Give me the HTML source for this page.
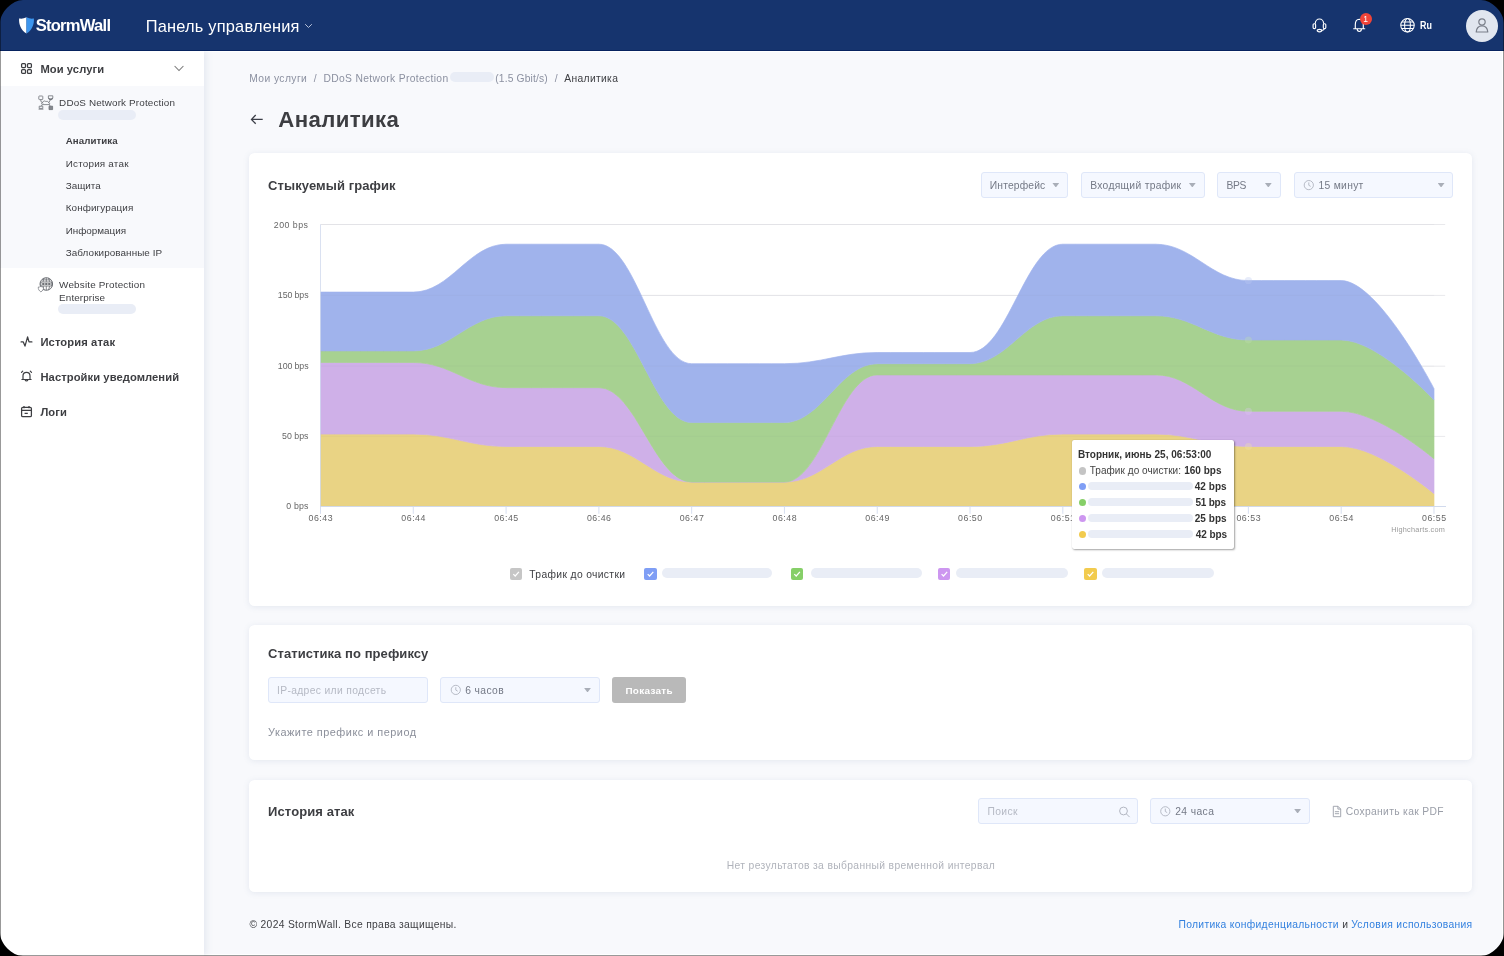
<!DOCTYPE html>
<html lang="ru"><head><meta charset="utf-8"><title>StormWall — Аналитика</title>
<style>
*{box-sizing:border-box;margin:0;padding:0}
html,body{width:1504px;height:956px;background:#000;overflow:hidden}
body{font-family:"Liberation Sans",sans-serif;-webkit-font-smoothing:antialiased}
#win{will-change:transform;position:absolute;left:0;top:0;width:1504px;height:956px;overflow:hidden;background:transparent}
#page{position:absolute;left:0;top:51px;width:1504px;height:905px;background:#fff}
.corner{z-index:10}
.t{position:absolute;white-space:pre;display:block}
a.t{text-decoration:none}
header{position:absolute;left:0;top:0;width:1504px;height:51px;background:#16346e;border-bottom:1px solid #07235f;z-index:5}
#side{position:absolute;left:0;top:51px;width:204px;height:905px;background:#fff;box-shadow:2px 0 7px rgba(105,125,160,.14);z-index:3}
#side .sub{position:absolute;left:0;top:35px;width:204px;height:181.5px;background:#f8f9fc}
.pill{position:absolute;background:#e9edf6;border-radius:6px}
main{position:absolute;left:0;top:0;width:1504px;height:956px}
#bg{position:absolute;left:204px;top:52px;width:1298px;height:902px;background:#f8f9fc}
.card{position:absolute;left:249px;width:1223px;background:#fff;border-radius:5.5px;box-shadow:0 1px 6px rgba(105,125,160,.14)}
.sel{position:absolute;height:26px;background:#f5f8ff;border:1px solid #dfe7f9;border-radius:3px}
.sel i{position:absolute;right:7.8px;top:9.9px;width:6.8px;height:4.6px;background:#a9aeb8;clip-path:polygon(0 0,100% 0,50% 100%)}
.btn{position:absolute;background:#b9b9b9;border-radius:3px}
svg{position:absolute;overflow:visible}
.edgeL{position:absolute;left:0;top:0;width:1px;height:956px;background:rgba(0,0,0,.4);z-index:9}
.edgeB{position:absolute;left:0;top:955px;width:1504px;height:1px;background:rgba(0,0,0,.4);z-index:9}
.edgeR{position:absolute;left:1503px;top:0;width:1px;height:956px;background:rgba(0,0,0,.42);z-index:9}
</style></head>
<body>
<div id="win">
<div id="page"></div>
<header>
<svg style="left:18px;top:17px" width="16" height="17" viewBox="0 0 16 17"><g transform="translate(0.500,0.000)"><path d="M8 0.3C5.6 1.6 3 1.9 0.6 1.5C0.2 7.5 2.6 13.3 8 16.6Z" fill="#fff"/><path d="M8 0.3C10.4 1.6 13 1.9 15.4 1.5C15.8 7.5 13.4 13.3 8 16.6Z" fill="#3d96ee"/></g></svg>
<div class="t" style="left:35.64px;top:14.60px;font-size:16.6px;line-height:22px;font-weight:700;color:#fff;letter-spacing:-0.753px;">StormWall</div>
<div class="t" style="left:145.74px;top:15.70px;font-size:16.4px;line-height:21px;font-weight:400;color:#fff;letter-spacing:0.198px;">Панель управления</div>
<svg style="left:304px;top:23px" width="8" height="6" viewBox="0 0 8 6"><g transform="translate(0.500,0.000)"><path d="M0.7 1.2L4 4.5L7.3 1.2" fill="none" stroke="#b9c3da" stroke-width="1"/></g></svg>
<svg style="left:1312px;top:18px" width="15" height="15" viewBox="0 0 15 15" fill="none" stroke="#fff" stroke-width="1.15"><path d="M3.3 5.8V5.4a4.15 4.4 0 0 1 8.3 0v0.4"/><rect x="1.1" y="5.7" width="2.5" height="4.9" rx="1.1"/><rect x="11.3" y="5.7" width="2.5" height="4.9" rx="1.1"/><path d="M12.3 10.6c-0.2 1.1-1.2 1.7-2.6 1.9"/><ellipse cx="7.5" cy="12.6" rx="2.3" ry="1.25"/></svg>
<svg style="left:1352px;top:17px" width="15" height="15" viewBox="0 0 15 15" fill="none" stroke="#fff" stroke-width="1.15"><g transform="translate(0.000,0.500)"><path d="M1.2 11.2h12M3.3 11V7.2c0-3 1.6-5.4 4-5.5c2.400.1 4 2.500 4 5.5V11"/><path d="M5.2 11.6a2.1 2.4 0 0 0 4.200 0"/></g></svg>
<div style="position:absolute;left:1359.5px;top:12.7px;width:12.6px;height:12.6px;border-radius:50%;background:#f04438"></div>
<div class="t" style="left:1363.26px;top:13.50px;font-size:8.5px;line-height:11px;font-weight:400;color:#fff;letter-spacing:0.000px;">1</div>
<svg style="left:1399px;top:17px" width="15.4" height="15.4" viewBox="0 0 16 16" fill="none" stroke="#fff" stroke-width="1.1"><g transform="translate(0.831,0.623)"><circle cx="8" cy="8" r="7"/><ellipse cx="8" cy="8" rx="3" ry="7"/><path d="M1 8h14M2 4.6h12M2 11.4h12"/></g></svg>
<div class="t" style="left:1419.78px;top:18.70px;font-size:10.4px;line-height:14px;font-weight:700;color:#fff;letter-spacing:0.000px;transform:scaleX(.86);transform-origin:0 50%;">Ru</div>
<div style="position:absolute;left:1466px;top:9.5px;width:32px;height:32px;border-radius:50%;background:#e1e6ef"></div>
<svg style="left:1475px;top:18px" width="14" height="15" viewBox="0 0 14 15" fill="none" stroke="#7a7f8a" stroke-width="1.2"><circle cx="7" cy="4" r="3.2"/><path d="M1.2 14c0.3-3.8 2.6-6.2 5.8-6.2s5.5 2.4 5.8 6.2z" stroke-linejoin="round"/></svg>
</header>
<nav id="side">
<div class="sub"></div>
<svg style="left:21px;top:12px" width="11" height="11" viewBox="0 0 11 11" fill="none" stroke="#3d3e42" stroke-width="1.25"><rect x="0.6" y="0.6" width="3.9" height="3.9" rx="0.9"/><rect x="6.5" y="0.6" width="3.9" height="3.9" rx="0.9"/><rect x="0.6" y="6.5" width="3.9" height="3.9" rx="0.9"/><rect x="6.5" y="6.5" width="3.9" height="3.9" rx="0.9"/></svg>
<div class="t" style="left:40.45px;top:10.80px;font-size:11.2px;line-height:15px;font-weight:700;color:#3d3e42;letter-spacing:0.065px;">Мои услуги</div>
<svg style="left:174px;top:14px" width="10" height="7" viewBox="0 0 10 7"><path d="M0.6 1L5 5.6L9.4 1" fill="none" stroke="#777" stroke-width="1.05"/></svg>
<svg style="left:38px;top:44px" width="16" height="16" viewBox="0 0 16 16" fill="none" stroke="#6f7278" stroke-width="0.8" stroke-linejoin="round"><rect x="0.8" y="1" width="4" height="3.6" rx="0.6"/><path d="M2.8 4.6v1.6"/><path d="M10.4 0.8h4.4v2.2c0 1.3-4.4 1.3-4.4 0z" /><path d="M10.6 3.2c0.6 1.2 3.4 1.2 4 0v0.6c-0.6 1.2-3.4 1.2-4 0z" fill="#6f7278"/><path d="M4.4 9.6c-1.2-0.2-1.2-2.2 0.4-2.3c0.3-1.5 2.4-1.8 3.1-0.6c1.1-0.9 2.9-0.2 2.9 1.3c1.4 0.1 1.4 1.6 0.2 1.6z" fill="#f8f9fc"/><path d="M2.8 6l2.2 2.6M12.6 4.4l-1.6 3M4.6 9.6l-1.8 1.8M11 9.6l1.6 1.8"/><path d="M1.2 11.2h3.6v2.2h-3.6zM0.6 14.2h4.8" /><rect x="11" y="11.2" width="3.6" height="3.4" fill="#85888e"/></svg>
<div class="t" style="left:59.10px;top:44.90px;font-size:9.9px;line-height:13px;font-weight:400;color:#3d3e42;letter-spacing:0.151px;">DDoS Network Protection</div>
<div class="pill" style="left:58px;top:59px;width:78px;height:10px"></div>
<a class="t" style="left:65.71px;top:83.30px;font-size:9.7px;line-height:13px;font-weight:700;color:#3d3e42;letter-spacing:0.078px;">Аналитика</a>
<a class="t" style="left:65.70px;top:105.60px;font-size:9.9px;line-height:13px;font-weight:400;color:#3d3e42;letter-spacing:0.204px;">История атак</a>
<a class="t" style="left:65.70px;top:128.00px;font-size:9.9px;line-height:13px;font-weight:400;color:#3d3e42;letter-spacing:0.013px;">Защита</a>
<a class="t" style="left:65.70px;top:150.30px;font-size:9.9px;line-height:13px;font-weight:400;color:#3d3e42;letter-spacing:0.118px;">Конфигурация</a>
<a class="t" style="left:65.70px;top:172.60px;font-size:9.9px;line-height:13px;font-weight:400;color:#3d3e42;letter-spacing:-0.018px;">Информация</a>
<a class="t" style="left:65.70px;top:194.80px;font-size:9.9px;line-height:13px;font-weight:400;color:#3d3e42;letter-spacing:0.085px;">Заблокированные IP</a>
<svg style="left:37px;top:226px" width="16" height="16" viewBox="0 0 16 16" fill="none" stroke="#55585f" stroke-width="0.85"><g transform="translate(0.600,0.000)"><circle cx="8.7" cy="7" r="6.3"/><path d="M8.7 0.8v4M8.7 9.2v4M6.6 1.2c-0.6 1-1 2.2-1.1 3.6M10.8 1.2c0.6 1 1 2.2 1.1 3.6M5.5 9.2c0.1 1.4 0.5 2.6 1.1 3.6M11.9 9.2c-0.1 1.4-0.5 2.6-1.1 3.6M4.4 2.9h8.6" stroke-width="0.7"/><rect x="3.3" y="5" width="10.9" height="4" fill="#fff" stroke-width="0.75"/><path d="M4.6 7h8.3" stroke="#3f4248" stroke-width="1.7" stroke-dasharray="2.3 0.7"/><path d="M3.3 9.4c1 0.6 1.8 0.7 2.6 0.6c0.2 2.3-0.8 3.8-2.6 4.9c-1.8-1.1-2.8-2.6-2.6-4.9c0.8 0.1 1.6 0 2.6-0.6z" fill="#fff" stroke="#777a80" stroke-width="0.75"/></g></svg>
<div class="t" style="left:59.10px;top:226.80px;font-size:9.9px;line-height:13px;font-weight:400;color:#3d3e42;letter-spacing:0.183px;">Website Protection</div>
<div class="t" style="left:59.10px;top:239.60px;font-size:9.9px;line-height:13px;font-weight:400;color:#3d3e42;letter-spacing:0.108px;">Enterprise</div>
<div class="pill" style="left:58px;top:253px;width:78px;height:10px"></div>
<svg style="left:20px;top:284px" width="12" height="12" viewBox="0 0 12 12" fill="none" stroke="#3d3e42" stroke-width="1.25" stroke-linejoin="round" stroke-linecap="round"><g transform="translate(0.500,0.500)"><path d="M0.6 6.4h2.2l1.7 4.2L7.1 1.4l1.4 5h2.9"/></g></svg>
<a class="t" style="left:40.45px;top:283.60px;font-size:11.2px;line-height:15px;font-weight:700;color:#3d3e42;letter-spacing:0.114px;">История атак</a>
<svg style="left:20px;top:319px" width="12" height="13" viewBox="0 0 12 13" fill="none" stroke="#3d3e42" stroke-width="1.2" stroke-linecap="round"><g transform="translate(0.500,0.000)"><path d="M2.5 9.4V5.8a3.5 3.5 0 0 1 7 0v3.6M1.4 9.5h9.2M4.7 10a1.4 1.4 0 0 0 2.6 0M1 2.4l1.2-1.2M11 2.4L9.8 1.2"/></g></svg>
<a class="t" style="left:40.45px;top:319.20px;font-size:11.2px;line-height:15px;font-weight:700;color:#3d3e42;letter-spacing:0.076px;">Настройки уведомлений</a>
<svg style="left:21px;top:354px" width="11" height="12" viewBox="0 0 11 12" fill="none" stroke="#3d3e42" stroke-width="1.25"><g transform="translate(0.000,0.500)"><rect x="0.6" y="1.8" width="9.8" height="9.4" rx="1.3"/><path d="M0.6 4.9h9.8M3 0.4v2.4M8 0.4v2.4M3.6 7.9h3.2"/></g></svg>
<a class="t" style="left:40.45px;top:353.50px;font-size:11.2px;line-height:15px;font-weight:700;color:#3d3e42;letter-spacing:0.087px;">Логи</a>
</nav>
<main>
<div id="bg"></div>
<a class="t" style="left:249.19px;top:71.80px;font-size:10.3px;line-height:13px;font-weight:400;color:#8b90a0;letter-spacing:0.423px;">Мои услуги</a>
<span class="t" style="left:313.79px;top:71.80px;font-size:10.3px;line-height:13px;font-weight:400;color:#8b90a0;letter-spacing:0.846px;">/</span>
<a class="t" style="left:323.49px;top:71.80px;font-size:10.3px;line-height:13px;font-weight:400;color:#8b90a0;letter-spacing:0.334px;">DDoS Network Protection</a>
<div class="pill" style="left:450px;top:72px;width:43.5px;height:10px;border-radius:5px"></div>
<a class="t" style="left:495.19px;top:71.80px;font-size:10.3px;line-height:13px;font-weight:400;color:#8b90a0;letter-spacing:0.149px;">(1.5 Gbit/s)</a>
<span class="t" style="left:554.79px;top:71.80px;font-size:10.3px;line-height:13px;font-weight:400;color:#8b90a0;letter-spacing:0.846px;">/</span>
<span class="t" style="left:564.29px;top:71.80px;font-size:10.3px;line-height:13px;font-weight:400;color:#3d3e42;letter-spacing:0.328px;">Аналитика</span>
<svg style="left:250px;top:114px" width="13" height="11" viewBox="0 0 13 11" fill="none" stroke="#3b3e47" stroke-width="1.3"><g transform="translate(0.500,0.000)"><path d="M5.2 1L1 5.4l4.2 4.4M1.2 5.4h11"/></g></svg>
<h1 class="t" style="left:278.31px;top:105.10px;font-size:22.2px;line-height:29px;font-weight:700;color:#3d3e42;letter-spacing:0.389px;">Аналитика</h1>

<section class="card" style="top:153px;height:452.5px"></section>
<h2 class="t" style="left:268.08px;top:176.70px;font-size:13px;line-height:17px;font-weight:700;color:#3d3e42;letter-spacing:0.084px;">Стыкуемый график</h2>
<div class="sel" style="left:981px;top:172px;width:87px"><i></i></div><div class="t" style="left:989.79px;top:178.70px;font-size:10.3px;line-height:13px;font-weight:400;color:#747986;letter-spacing:0.152px;">Интерфейс</div>
<div class="sel" style="left:1081px;top:172px;width:123.5px"><i></i></div><div class="t" style="left:1090.19px;top:178.70px;font-size:10.3px;line-height:13px;font-weight:400;color:#747986;letter-spacing:0.307px;">Входящий трафик</div>
<div class="sel" style="left:1217px;top:172px;width:63.5px"><i></i></div><div class="t" style="left:1226.49px;top:178.70px;font-size:10.3px;line-height:13px;font-weight:400;color:#747986;letter-spacing:-0.329px;">BPS</div>
<div class="sel" style="left:1294px;top:172px;width:159.29999999999995px"><i></i></div><svg style="left:1303px;top:179px" width="11" height="11" viewBox="0 0 11 11" fill="none" stroke="#b0b4bf" stroke-width="0.9"><g transform="translate(0.300,0.600)"><circle cx="5.5" cy="5.5" r="4.6"/><path d="M5.5 2.8v2.9l1.9 1.1"/></g></svg><div class="t" style="left:1318.49px;top:178.70px;font-size:10.3px;line-height:13px;font-weight:400;color:#747986;letter-spacing:0.302px;">15 минут</div>
<svg style="left:0;top:0" width="1504" height="956" viewBox="0 0 1504 956">
<path d="M320.5 436.40H1445.2" stroke="#e9e9ec" stroke-width="1"/><path d="M320.5 366.20H1445.2" stroke="#e9e9ec" stroke-width="1"/><path d="M320.5 295.40H1445.2" stroke="#e9e9ec" stroke-width="1"/><path d="M320.5 224.50H1445.2" stroke="#e9e9ec" stroke-width="1"/>
<path d="M320.50,434.10C320.50,434.10 376.17,434.10 413.29,434.10C450.41,434.10 468.96,446.50 506.08,446.50C543.20,446.50 561.75,446.50 598.87,446.50C635.99,446.50 654.54,482.00 691.66,482.00C728.78,482.00 747.33,482.00 784.45,482.00C821.57,482.00 840.12,446.50 877.24,446.50C914.36,446.50 932.91,446.50 970.03,446.50C1007.15,446.50 1025.70,434.10 1062.82,434.10C1099.94,434.10 1118.49,434.10 1155.61,434.10C1192.73,434.10 1211.28,446.50 1248.40,446.50C1285.52,446.50 1304.07,446.50 1341.19,446.50C1378.31,446.50 1433.98,493.60 1433.98,493.60L1433.98,506.20C1433.98,506.20 1378.31,506.20 1341.19,506.20C1304.07,506.20 1285.52,506.20 1248.40,506.20C1211.28,506.20 1192.73,506.20 1155.61,506.20C1118.49,506.20 1099.94,506.20 1062.82,506.20C1025.70,506.20 1007.15,506.20 970.03,506.20C932.91,506.20 914.36,506.20 877.24,506.20C840.12,506.20 821.57,506.20 784.45,506.20C747.33,506.20 728.78,506.20 691.66,506.20C654.54,506.20 635.99,506.20 598.87,506.20C561.75,506.20 543.20,506.20 506.08,506.20C468.96,506.20 450.41,506.20 413.29,506.20C376.17,506.20 320.50,506.20 320.50,506.20Z" fill="#e9d384" stroke="#e9d384" stroke-width="0.7" stroke-linejoin="round"/><path d="M320.50,362.50C320.50,362.50 376.17,362.50 413.29,362.50C450.41,362.50 468.96,387.65 506.08,387.65C543.20,387.65 561.75,387.65 598.87,387.65C635.99,387.65 654.54,482.00 691.66,482.00C728.78,482.00 747.33,482.00 784.45,482.00C821.57,482.00 840.12,374.90 877.24,374.90C914.36,374.90 932.91,374.90 970.03,374.90C1007.15,374.90 1025.70,374.90 1062.82,374.90C1099.94,374.90 1118.49,374.90 1155.61,374.90C1192.73,374.90 1211.28,411.30 1248.40,411.30C1285.52,411.30 1304.07,411.30 1341.19,411.30C1378.31,411.30 1433.98,458.80 1433.98,458.80L1433.98,493.60C1433.98,493.60 1378.31,446.50 1341.19,446.50C1304.07,446.50 1285.52,446.50 1248.40,446.50C1211.28,446.50 1192.73,434.10 1155.61,434.10C1118.49,434.10 1099.94,434.10 1062.82,434.10C1025.70,434.10 1007.15,446.50 970.03,446.50C932.91,446.50 914.36,446.50 877.24,446.50C840.12,446.50 821.57,482.00 784.45,482.00C747.33,482.00 728.78,482.00 691.66,482.00C654.54,482.00 635.99,446.50 598.87,446.50C561.75,446.50 543.20,446.50 506.08,446.50C468.96,446.50 450.41,434.10 413.29,434.10C376.17,434.10 320.50,434.10 320.50,434.10Z" fill="#cfb0e8" stroke="#cfb0e8" stroke-width="0.7" stroke-linejoin="round"/><path d="M320.50,350.90C320.50,350.90 376.17,350.90 413.29,350.90C450.41,350.90 468.96,315.75 506.08,315.75C543.20,315.75 561.75,315.75 598.87,315.75C635.99,315.75 654.54,422.50 691.66,422.50C728.78,422.50 747.33,422.50 784.45,422.50C821.57,422.50 840.12,363.70 877.24,363.70C914.36,363.70 932.91,363.70 970.03,363.70C1007.15,363.70 1025.70,315.75 1062.82,315.75C1099.94,315.75 1118.49,315.75 1155.61,315.75C1192.73,315.75 1211.28,340.00 1248.40,340.00C1285.52,340.00 1304.07,340.00 1341.19,340.00C1378.31,340.00 1433.98,399.90 1433.98,399.90L1433.98,458.80C1433.98,458.80 1378.31,411.30 1341.19,411.30C1304.07,411.30 1285.52,411.30 1248.40,411.30C1211.28,411.30 1192.73,374.90 1155.61,374.90C1118.49,374.90 1099.94,374.90 1062.82,374.90C1025.70,374.90 1007.15,374.90 970.03,374.90C932.91,374.90 914.36,374.90 877.24,374.90C840.12,374.90 821.57,482.00 784.45,482.00C747.33,482.00 728.78,482.00 691.66,482.00C654.54,482.00 635.99,387.65 598.87,387.65C561.75,387.65 543.20,387.65 506.08,387.65C468.96,387.65 450.41,362.50 413.29,362.50C376.17,362.50 320.50,362.50 320.50,362.50Z" fill="#a7d191" stroke="#a7d191" stroke-width="0.7" stroke-linejoin="round"/><path d="M320.50,292.10C320.50,292.10 376.17,292.10 413.29,292.10C450.41,292.10 468.96,244.20 506.08,244.20C543.20,244.20 561.75,244.20 598.87,244.20C635.99,244.20 654.54,363.70 691.66,363.70C728.78,363.70 747.33,363.70 784.45,363.70C821.57,363.70 840.12,352.50 877.24,352.50C914.36,352.50 932.91,352.50 970.03,352.50C1007.15,352.50 1025.70,244.20 1062.82,244.20C1099.94,244.20 1118.49,244.20 1155.61,244.20C1192.73,244.20 1211.28,280.60 1248.40,280.60C1285.52,280.60 1304.07,280.60 1341.19,280.60C1378.31,280.60 1433.98,388.60 1433.98,388.60L1433.98,399.90C1433.98,399.90 1378.31,340.00 1341.19,340.00C1304.07,340.00 1285.52,340.00 1248.40,340.00C1211.28,340.00 1192.73,315.75 1155.61,315.75C1118.49,315.75 1099.94,315.75 1062.82,315.75C1025.70,315.75 1007.15,363.70 970.03,363.70C932.91,363.70 914.36,363.70 877.24,363.70C840.12,363.70 821.57,422.50 784.45,422.50C747.33,422.50 728.78,422.50 691.66,422.50C654.54,422.50 635.99,315.75 598.87,315.75C561.75,315.75 543.20,315.75 506.08,315.75C468.96,315.75 450.41,350.90 413.29,350.90C376.17,350.90 320.50,350.90 320.50,350.90Z" fill="#a0b3ec" stroke="#a0b3ec" stroke-width="0.7" stroke-linejoin="round"/>
<path d="M320.5 436.40H1434.2" stroke="#7a7a8a" stroke-opacity="0.05" stroke-width="1"/><path d="M320.5 366.20H1434.2" stroke="#7a7a8a" stroke-opacity="0.05" stroke-width="1"/><path d="M320.5 295.40H1434.2" stroke="#7a7a8a" stroke-opacity="0.05" stroke-width="1"/><path d="M320.5 224.50H1434.2" stroke="#7a7a8a" stroke-opacity="0.05" stroke-width="1"/>
<circle cx="1248.40" cy="446.50" r="3.6" fill="#e9d384" fill-opacity="0.28"/><circle cx="1248.40" cy="446.50" r="3.6" fill="#fff" fill-opacity="0.10"/><circle cx="1248.40" cy="411.30" r="3.6" fill="#cfb0e8" fill-opacity="0.28"/><circle cx="1248.40" cy="411.30" r="3.6" fill="#fff" fill-opacity="0.10"/><circle cx="1248.40" cy="340.00" r="3.6" fill="#a7d191" fill-opacity="0.28"/><circle cx="1248.40" cy="340.00" r="3.6" fill="#fff" fill-opacity="0.10"/><circle cx="1248.40" cy="280.60" r="3.6" fill="#a0b3ec" fill-opacity="0.28"/><circle cx="1248.40" cy="280.60" r="3.6" fill="#fff" fill-opacity="0.10"/>
<path d="M320.5 224.5V506.5" stroke="#cfd8ec" stroke-width="0.9" stroke-opacity="0.85"/>
<path d="M320 506.5H1446" stroke="#cfd8ec" stroke-width="0.95"/>
<path d="M320.50 506.5v7.3" stroke="#d3dbee" stroke-width="0.9"/><path d="M413.29 506.5v7.3" stroke="#d3dbee" stroke-width="0.9"/><path d="M506.08 506.5v7.3" stroke="#d3dbee" stroke-width="0.9"/><path d="M598.87 506.5v7.3" stroke="#d3dbee" stroke-width="0.9"/><path d="M691.66 506.5v7.3" stroke="#d3dbee" stroke-width="0.9"/><path d="M784.45 506.5v7.3" stroke="#d3dbee" stroke-width="0.9"/><path d="M877.24 506.5v7.3" stroke="#d3dbee" stroke-width="0.9"/><path d="M970.03 506.5v7.3" stroke="#d3dbee" stroke-width="0.9"/><path d="M1062.82 506.5v7.3" stroke="#d3dbee" stroke-width="0.9"/><path d="M1155.61 506.5v7.3" stroke="#d3dbee" stroke-width="0.9"/><path d="M1248.40 506.5v7.3" stroke="#d3dbee" stroke-width="0.9"/><path d="M1341.19 506.5v7.3" stroke="#d3dbee" stroke-width="0.9"/><path d="M1433.98 506.5v7.3" stroke="#d3dbee" stroke-width="0.9"/>
</svg>
<div class="t" style="left:286.35px;top:501.40px;font-size:8.8px;line-height:11px;font-weight:400;color:#666;letter-spacing:0.117px;">0 bps</div><div class="t" style="left:282.05px;top:431.30px;font-size:8.8px;line-height:11px;font-weight:400;color:#666;letter-spacing:-0.001px;">50 bps</div><div class="t" style="left:277.85px;top:361.10px;font-size:8.8px;line-height:11px;font-weight:400;color:#666;letter-spacing:-0.100px;">100 bps</div><div class="t" style="left:277.85px;top:290.30px;font-size:8.8px;line-height:11px;font-weight:400;color:#666;letter-spacing:-0.100px;">150 bps</div><div class="t" style="left:273.85px;top:220.10px;font-size:8.8px;line-height:11px;font-weight:400;color:#666;letter-spacing:0.472px;">200 bps</div>
<div class="t" style="left:308.55px;top:512.70px;font-size:8.8px;line-height:11px;font-weight:400;color:#666;letter-spacing:0.520px;">06:43</div><div class="t" style="left:401.34px;top:512.70px;font-size:8.8px;line-height:11px;font-weight:400;color:#666;letter-spacing:0.520px;">06:44</div><div class="t" style="left:494.13px;top:512.70px;font-size:8.8px;line-height:11px;font-weight:400;color:#666;letter-spacing:0.520px;">06:45</div><div class="t" style="left:586.92px;top:512.70px;font-size:8.8px;line-height:11px;font-weight:400;color:#666;letter-spacing:0.520px;">06:46</div><div class="t" style="left:679.71px;top:512.70px;font-size:8.8px;line-height:11px;font-weight:400;color:#666;letter-spacing:0.520px;">06:47</div><div class="t" style="left:772.50px;top:512.70px;font-size:8.8px;line-height:11px;font-weight:400;color:#666;letter-spacing:0.520px;">06:48</div><div class="t" style="left:865.29px;top:512.70px;font-size:8.8px;line-height:11px;font-weight:400;color:#666;letter-spacing:0.520px;">06:49</div><div class="t" style="left:958.08px;top:512.70px;font-size:8.8px;line-height:11px;font-weight:400;color:#666;letter-spacing:0.520px;">06:50</div><div class="t" style="left:1050.87px;top:512.70px;font-size:8.8px;line-height:11px;font-weight:400;color:#666;letter-spacing:0.520px;">06:51</div><div class="t" style="left:1143.66px;top:512.70px;font-size:8.8px;line-height:11px;font-weight:400;color:#666;letter-spacing:0.520px;">06:52</div><div class="t" style="left:1236.45px;top:512.70px;font-size:8.8px;line-height:11px;font-weight:400;color:#666;letter-spacing:0.520px;">06:53</div><div class="t" style="left:1329.24px;top:512.70px;font-size:8.8px;line-height:11px;font-weight:400;color:#666;letter-spacing:0.520px;">06:54</div><div class="t" style="left:1422.03px;top:512.70px;font-size:8.8px;line-height:11px;font-weight:400;color:#666;letter-spacing:0.520px;">06:55</div>
<div class="t" style="left:1391.21px;top:524.50px;font-size:7.3px;line-height:9px;font-weight:400;color:#9a9a9a;letter-spacing:0.222px;">Highcharts.com</div>

<div style="position:absolute;left:510px;top:568px;width:12.2px;height:12.2px;border-radius:2px;background:#c6c6c6"></div><svg style="left:512px;top:571px" width="7" height="6" viewBox="0 0 7 6" fill="none" stroke="#fff" stroke-width="1.2"><g transform="translate(0.600,0.000)"><path d="M0.7 3.1l1.9 1.9L6.3 0.8"/></g></svg><div class="t" style="left:529.29px;top:567.70px;font-size:10.3px;line-height:13px;font-weight:400;color:#3d3e42;letter-spacing:0.355px;">Трафик до очистки</div><div style="position:absolute;left:644.4px;top:568px;width:12.2px;height:12.2px;border-radius:2px;background:#7f9ef5"></div><svg style="left:647.00px;top:571px" width="7" height="6" viewBox="0 0 7 6" fill="none" stroke="#fff" stroke-width="1.2"><path d="M0.7 3.1l1.9 1.9L6.3 0.8"/></svg><div class="pill" style="left:662px;top:568.4px;width:110.0px;height:9.6px;border-radius:5px"></div><div style="position:absolute;left:791px;top:568px;width:12.2px;height:12.2px;border-radius:2px;background:#86cf68"></div><svg style="left:793px;top:571px" width="7" height="6" viewBox="0 0 7 6" fill="none" stroke="#fff" stroke-width="1.2"><g transform="translate(0.600,0.000)"><path d="M0.7 3.1l1.9 1.9L6.3 0.8"/></g></svg><div class="pill" style="left:810.6px;top:568.4px;width:111.2px;height:9.6px;border-radius:5px"></div><div style="position:absolute;left:938.3px;top:568px;width:12.2px;height:12.2px;border-radius:2px;background:#cd97f0"></div><svg style="left:940px;top:571px" width="7" height="6" viewBox="0 0 7 6" fill="none" stroke="#fff" stroke-width="1.2"><g transform="translate(0.900,0.000)"><path d="M0.7 3.1l1.9 1.9L6.3 0.8"/></g></svg><div class="pill" style="left:956.3px;top:568.4px;width:111.5px;height:9.6px;border-radius:5px"></div><div style="position:absolute;left:1084.4px;top:568px;width:12.2px;height:12.2px;border-radius:2px;background:#f2cb4e"></div><svg style="left:1087.00px;top:571px" width="7" height="6" viewBox="0 0 7 6" fill="none" stroke="#fff" stroke-width="1.2"><path d="M0.7 3.1l1.9 1.9L6.3 0.8"/></svg><div class="pill" style="left:1102.2px;top:568.4px;width:111.8px;height:9.6px;border-radius:5px"></div>
<div style="position:absolute;left:1072.2px;top:440.2px;width:161.6px;height:108.4px;background:#fff;border-radius:2px;box-shadow:1px 1px 2px rgba(0,0,0,.35),0 0 1px rgba(0,0,0,.25)"></div>
<div class="t" style="left:1077.90px;top:448.40px;font-size:10px;line-height:13px;font-weight:700;color:#333;letter-spacing:0.012px;">Вторник, июнь 25, 06:53:00</div>
<div style="position:absolute;left:1078.6px;top:467.0px;width:7.6px;height:7.6px;border-radius:50%;background:#c4c4c4"></div><div class="t" style="left:1089.70px;top:464.30px;font-size:10px;line-height:13px;font-weight:400;color:#444;letter-spacing:0.062px;">Трафик до очистки:</div><div class="t" style="left:1184.20px;top:464.30px;font-size:10px;line-height:13px;font-weight:700;color:#333;letter-spacing:0.007px;">160 bps</div>
<div style="position:absolute;left:1078.6px;top:482.59999999999997px;width:7.6px;height:7.6px;border-radius:50%;background:#7f9ef5"></div><div class="pill" style="left:1088.1px;top:482.09999999999997px;width:105.4px;height:7.8px;border-radius:4px;background:#e9edf6"></div><div class="t" style="left:1194.70px;top:480.10px;font-size:10px;line-height:13px;font-weight:700;color:#333;letter-spacing:0.052px;">42 bps</div>
<div style="position:absolute;left:1078.6px;top:498.5px;width:7.6px;height:7.6px;border-radius:50%;background:#86cf68"></div><div class="pill" style="left:1088.1px;top:498.0px;width:105.4px;height:7.8px;border-radius:4px;background:#e9edf6"></div><div class="t" style="left:1195.50px;top:496.00px;font-size:10px;line-height:13px;font-weight:700;color:#333;letter-spacing:-0.248px;">51 bps</div>
<div style="position:absolute;left:1078.6px;top:514.6px;width:7.6px;height:7.6px;border-radius:50%;background:#cd97f0"></div><div class="pill" style="left:1088.1px;top:514.1px;width:105.4px;height:7.8px;border-radius:4px;background:#e9edf6"></div><div class="t" style="left:1194.70px;top:512.10px;font-size:10px;line-height:13px;font-weight:700;color:#333;letter-spacing:0.052px;">25 bps</div>
<div style="position:absolute;left:1078.6px;top:530.6px;width:7.6px;height:7.6px;border-radius:50%;background:#f2cb4e"></div><div class="pill" style="left:1088.1px;top:530.1px;width:105.4px;height:7.8px;border-radius:4px;background:#e9edf6"></div><div class="t" style="left:1195.80px;top:528.10px;font-size:10px;line-height:13px;font-weight:700;color:#333;letter-spacing:-0.065px;">42 bps</div>


<section class="card" style="top:625px;height:135px"></section>
<h2 class="t" style="left:268.08px;top:644.70px;font-size:13px;line-height:17px;font-weight:700;color:#3d3e42;letter-spacing:0.065px;">Статистика по префиксу</h2>
<div class="sel" style="left:268.3px;top:677px;width:159.5px"></div>
<div class="t" style="left:276.99px;top:683.90px;font-size:10.3px;line-height:13px;font-weight:400;color:#b5b9c4;letter-spacing:0.349px;">IP-адрес или подсеть</div>
<div class="sel" style="left:440.2px;top:677px;width:159.5px"><i></i></div>
<svg style="left:450px;top:684px" width="11" height="11" viewBox="0 0 11 11" fill="none" stroke="#b0b4bf" stroke-width="0.9"><g transform="translate(0.300,0.400)"><circle cx="5.5" cy="5.5" r="4.6"/><path d="M5.5 2.8v2.9l1.9 1.1"/></g></svg>
<div class="t" style="left:465.19px;top:683.90px;font-size:10.3px;line-height:13px;font-weight:400;color:#747986;letter-spacing:0.397px;">6 часов</div>
<div class="btn" style="left:612.3px;top:677px;width:73.5px;height:26px"></div>
<div class="t" style="left:625.40px;top:683.90px;font-size:9.9px;line-height:13px;font-weight:700;color:#fff;letter-spacing:0.327px;">Показать</div>
<div class="t" style="left:268.06px;top:724.80px;font-size:10.9px;line-height:14px;font-weight:400;color:#8b8f9a;letter-spacing:0.498px;">Укажите префикс и период</div>

<section class="card" style="top:780px;height:111.5px"></section>
<h2 class="t" style="left:268.08px;top:803.20px;font-size:13px;line-height:17px;font-weight:700;color:#3d3e42;letter-spacing:0.094px;">История атак</h2>
<div class="sel" style="left:978.3px;top:798px;width:159.5px"></div>
<div class="t" style="left:987.39px;top:805.20px;font-size:10.3px;line-height:13px;font-weight:400;color:#b5b9c4;letter-spacing:0.395px;">Поиск</div>
<svg style="left:1118px;top:806px" width="12" height="12" viewBox="0 0 12 12" fill="none" stroke="#b3b7c2" stroke-width="1"><g transform="translate(0.500,0.000)"><circle cx="5" cy="5" r="3.9"/><path d="M7.9 7.9l3.2 3.2"/></g></svg>
<div class="sel" style="left:1150.3px;top:798px;width:159.5px"><i></i></div>
<svg style="left:1159px;top:805px" width="11" height="11" viewBox="0 0 11 11" fill="none" stroke="#b0b4bf" stroke-width="0.9"><g transform="translate(0.800,0.800)"><circle cx="5.5" cy="5.5" r="4.6"/><path d="M5.5 2.8v2.9l1.9 1.1"/></g></svg>
<div class="t" style="left:1175.19px;top:805.20px;font-size:10.3px;line-height:13px;font-weight:400;color:#747986;letter-spacing:0.406px;">24 часа</div>
<svg style="left:1332px;top:805px" width="9" height="12" viewBox="0 0 9 12" fill="none" stroke="#9a9ea8" stroke-width="0.9"><g transform="translate(0.500,0.500)"><path d="M0.8 0.8h4.7l2.7 2.7v7.7H0.8zM5.4 0.8v2.8h2.8M2.4 6.2h4.2M2.4 8.2h4.2"/></g></svg>
<div class="t" style="left:1345.79px;top:805.20px;font-size:10.3px;line-height:13px;font-weight:400;color:#9a9ea8;letter-spacing:0.328px;">Сохранить как PDF</div>
<div class="t" style="left:726.79px;top:858.50px;font-size:10.3px;line-height:13px;font-weight:400;color:#b0b3bb;letter-spacing:0.360px;">Нет результатов за выбранный временной интервал</div>

<footer>
<div class="t" style="left:249.49px;top:917.50px;font-size:10.3px;line-height:13px;font-weight:400;color:#3d3e42;letter-spacing:0.319px;">© 2024 StormWall. Все права защищены.</div>
<a class="t" style="left:1178.49px;top:917.50px;font-size:10.3px;line-height:13px;font-weight:400;color:#3381df;letter-spacing:0.315px;">Политика конфиденциальности</a>
<span class="t" style="left:1342.19px;top:917.50px;font-size:10.3px;line-height:13px;font-weight:400;color:#3d3e42;letter-spacing:-0.045px;">и</span>
<a class="t" style="left:1351.19px;top:917.50px;font-size:10.3px;line-height:13px;font-weight:400;color:#3381df;letter-spacing:0.334px;">Условия использования</a>
</footer>
</main>
<svg class="corner" style="left:0px;top:0px" width="24" height="24" viewBox="0 0 24 24"><path d="M0 0H23C12.3 0 0 12.3 0 23Z" fill="#000"/></svg>
<svg class="corner" style="left:1480px;top:0px" width="24" height="24" viewBox="0 0 24 24"><path d="M24 0H1C11.7 0 24 12.3 24 23Z" fill="#000"/></svg>
<svg class="corner" style="left:0px;top:932px" width="24" height="24" viewBox="0 0 24 24"><path d="M0 24H23C12.3 24 0 11.7 0 1Z" fill="#000"/></svg>
<svg class="corner" style="left:1480px;top:932px" width="24" height="24" viewBox="0 0 24 24"><path d="M24 24H1C11.7 24 24 11.7 24 1Z" fill="#000"/></svg>
<div class="edgeL"></div><div class="edgeB"></div><div class="edgeR"></div>
</div>
</body></html>
